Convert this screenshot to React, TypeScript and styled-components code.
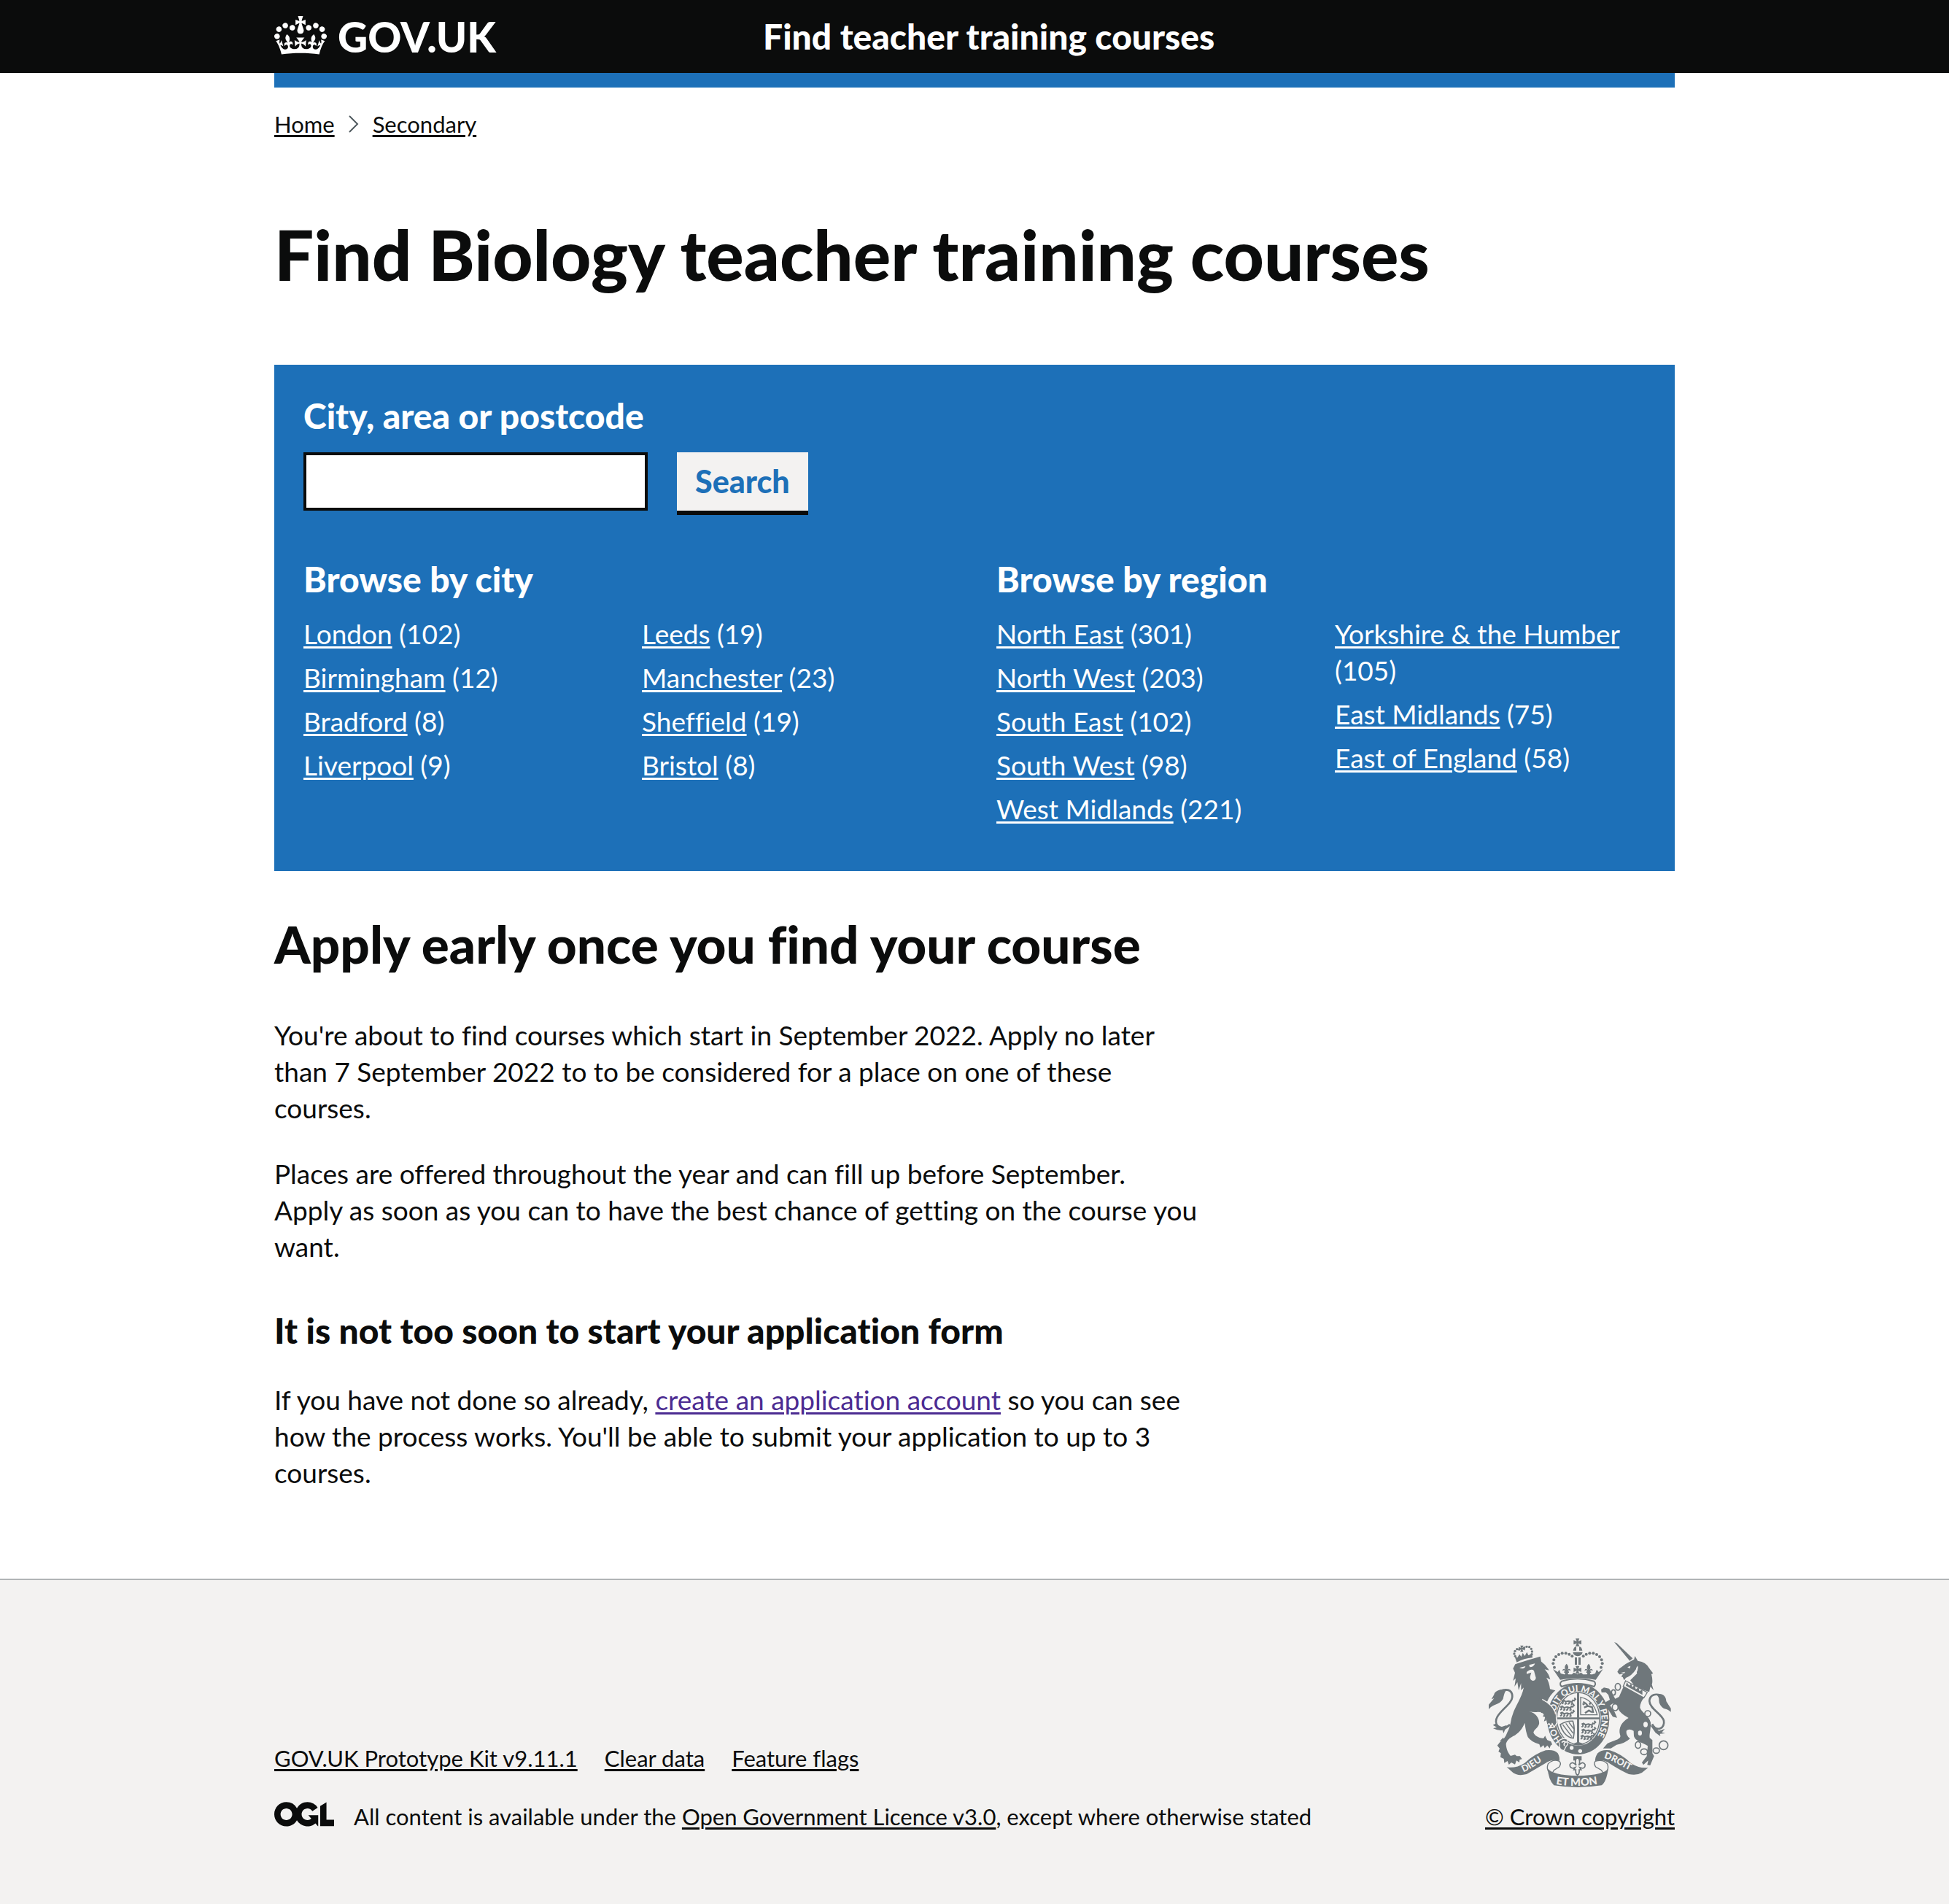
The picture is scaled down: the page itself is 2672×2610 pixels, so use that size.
import React from "react";
import styled, { createGlobalStyle } from "styled-components";

const ink = "#0b0c0c";
const blue = "#1d70b8";
const paper = "#f3f2f1";
const armsGrey = "#6f777b";
const heavy = 900;

const GlobalStyle = createGlobalStyle`
  *, *::before, *::after { box-sizing: border-box; }
  body {
    margin: 0;
    background: ${paper};
    color: ${ink};
    font-family: Lato, "Liberation Sans", Arial, sans-serif;
    font-variant-ligatures: no-common-ligatures;
  }
`;

const Page = styled.div`
  background: #fff;
`;

const Container = styled.div`
  width: calc(100% - 120px);
  max-width: 1920px;
  margin: 0 auto;
`;

const Link = styled.a<{ $tone?: "white" | "visited" }>`
  color: ${(p) => (p.$tone === "white" ? "#fff" : p.$tone === "visited" ? "#4c2c92" : ink)};
  text-decoration: underline;
  text-decoration-thickness: 3px;
  text-underline-offset: 3px;
`;

/* Header */

const HeaderBar = styled.header`
  background: ${ink};
  color: #fff;
`;

const HeaderInner = styled(Container)`
  display: flex;
  align-items: center;
  height: 100px;
`;

const LogoCell = styled.div`
  width: calc(100% / 3);
`;

const LogoLink = styled.a`
  display: inline-flex;
  align-items: center;
  gap: 15px;
  color: #fff;
  text-decoration: none;
  font-size: 57px;
  font-weight: ${heavy};
  line-height: 96px;

  svg {
    margin-bottom: 4px;
  }
`;

const ServiceName = styled.a`
  padding-left: 30px;
  color: #fff;
  text-decoration: none;
  font-size: 48px;
  font-weight: ${heavy};
  line-height: 60px;
`;

const HeaderRule = styled(Container)`
  height: 20px;
  background: ${blue};
`;

/* Breadcrumbs */

const Crumbs = styled.ol`
  display: flex;
  align-items: center;
  gap: 19px;
  margin: 0;
  padding: 30px 0 0;
  list-style: none;
  font-size: 31px;
  line-height: 40px;
`;

const Crumb = styled.li`
  display: flex;
  align-items: center;
  gap: 19px;
`;

/* Main */

const Main = styled.main`
  padding: 108px 0 120px;
`;

const PageTitle = styled.h1`
  margin: 0 0 102px;
  font-size: 96px;
  font-weight: ${heavy};
  line-height: 100px;
`;

const SearchPanel = styled.section`
  padding: 40px 40px 50px;
  background: ${blue};
  color: #fff;
`;

const SearchForm = styled.form`
  display: grid;
  grid-template-columns: 472px auto;
  justify-content: start;
  column-gap: 40px;
  row-gap: 20px;
  margin-bottom: 64px;
`;

const SearchLabel = styled.label`
  grid-column: 1 / -1;
  font-size: 48px;
  font-weight: ${heavy};
  line-height: 60px;
`;

const SearchInput = styled.input`
  width: 100%;
  height: 80px;
  padding: 10px;
  border: 4px solid ${ink};
  border-radius: 0;
  background: #fff;
  font: inherit;
  font-size: 37px;
`;

const SearchButton = styled.button`
  height: 80px;
  padding: 0 25px;
  border: 0;
  background: ${paper};
  box-shadow: 0 6px 0 ${ink};
  color: ${blue};
  font-family: inherit;
  font-size: 43px;
  font-weight: ${heavy};
  line-height: 50px;
`;

const BrowseGrid = styled.div`
  display: grid;
  grid-template-columns: 1fr 1fr;
  gap: 60px;
`;

const SubHeading = styled.h2<{ $gap?: number }>`
  margin: 0 0 ${(p) => p.$gap ?? 20}px;
  font-size: 48px;
  font-weight: ${heavy};
  line-height: 60px;
`;

const PlaceColumns = styled.div`
  display: grid;
  grid-template-columns: 1fr 1fr;
  gap: 38px;
`;

const PlaceList = styled.ul`
  margin: 0;
  padding: 0;
  list-style: none;
  font-size: 37px;
  line-height: 50px;
`;

const Place = styled.li`
  margin-bottom: 10px;
`;

const Guidance = styled.section`
  max-width: 1276px;
  margin-top: 60px;
`;

const SectionTitle = styled.h2`
  margin: 0 0 60px;
  font-size: 71px;
  font-weight: ${heavy};
  line-height: 80px;
`;

const Paragraph = styled.p`
  margin: 0 0 40px;
  font-size: 37px;
  line-height: 50px;

  &:last-child {
    margin-bottom: 0;
  }
`;

const SubSection = styled.div`
  margin-top: 60px;
`;

/* Footer */

const Footer = styled.footer`
  padding: 80px 0 100px;
  border-top: 2px solid #b1b4b6;
  background: ${paper};
  font-size: 31px;
  line-height: 40px;
`;

const FooterInner = styled(Container)`
  display: flex;
  align-items: flex-end;
  justify-content: space-between;
  gap: 60px;
`;

const FooterLinks = styled.ul`
  display: flex;
  flex-wrap: wrap;
  gap: 37px;
  margin: 0 0 40px;
  padding: 0;
  list-style: none;
`;

const Licence = styled.div`
  display: flex;
  align-items: flex-start;
  gap: 27px;
`;

const Copyright = styled.div`
  display: flex;
  flex-direction: column;
  align-items: center;
  gap: 20px;
`;

/* Drawings */

const Crown = () => (
  <svg width="72" height="53" viewBox="0 0 132 97" aria-hidden="true">
    <path
      fill="currentColor"
      fillRule="evenodd"
      d="M25 30.2c3.5 1.5 7.7-.2 9.1-3.7 1.5-3.6-.2-7.8-3.9-9.2-3.6-1.4-7.6.3-9.1 3.9-1.4 3.5.3 7.5 3.9 9zM9 39.5c3.6 1.5 7.8-.2 9.2-3.7 1.5-3.6-.2-7.8-3.9-9.1-3.6-1.5-7.6.2-9.1 3.8-1.4 3.5.3 7.5 3.8 9zM4.4 57.2c3.5 1.5 7.7-.2 9.1-3.8 1.5-3.6-.2-7.7-3.9-9.1-3.5-1.5-7.6.3-9.1 3.8-1.4 3.5.3 7.6 3.9 9.1zm38.3-21.4c3.5 1.5 7.7-.2 9.1-3.8 1.5-3.6-.2-7.7-3.9-9.1-3.6-1.5-7.6.3-9.1 3.8-1.3 3.6.4 7.7 3.9 9.1zm64.4-5.6c-3.6 1.5-7.8-.2-9.1-3.7-1.5-3.6.2-7.8 3.8-9.2 3.6-1.4 7.7.3 9.2 3.9 1.3 3.5-.4 7.5-3.9 9zm15.9 9.3c-3.6 1.5-7.7-.2-9.1-3.7-1.5-3.6.2-7.8 3.7-9.1 3.6-1.5 7.7.2 9.2 3.8 1.5 3.5-.3 7.5-3.8 9zm4.7 17.7c-3.6 1.5-7.8-.2-9.2-3.8-1.5-3.6.2-7.7 3.9-9.1 3.6-1.5 7.7.3 9.2 3.8 1.3 3.5-.4 7.6-3.9 9.1zM89.3 35.8c-3.6 1.5-7.8-.2-9.2-3.8-1.4-3.6.2-7.7 3.9-9.1 3.6-1.5 7.7.3 9.2 3.8 1.4 3.6-.3 7.7-3.9 9.1zM69.7 17.7l8.9 4.7V9.3l-8.9 2.8c-.2-.3-.5-.6-.9-.9L72.4 0H59.6l3.5 11.2c-.3.3-.6.5-.9.9l-8.8-2.8v13.1l8.8-4.7c.3.3.6.7.9.9l-5 15.4v.1c-.2.8-.4 1.6-.4 2.4 0 4.1 3.1 7.5 7 8.1h.2c.3 0 .7.1 1 .1.4 0 .7 0 1-.1h.2c4-.6 7.1-4.1 7.1-8.1 0-.8-.1-1.7-.4-2.4V34l-5.1-15.4c.4-.2.7-.6 1-.9zM66 92.8c16.9 0 32.8 1.1 47.1 3.2 4-16.9 8.9-26.7 14-33.5l-9.6-3.4c1 4.9 1.1 7.2 0 10.2-1.5-1.4-3-4.3-4.2-8.7L108.6 76c2.8-2 5-3.2 7.5-3.3-4.4 9.4-10 11.9-13.6 11.2-4.3-.8-6.3-4.6-5.6-7.9 1-4.7 5.7-5.9 8-.5 4.3-8.7-3-11.4-7.6-8.8 7.1-7.2 7.9-13.5 2.1-21.1-8 6.1-8.1 12.3-4.5 20.8-4.7-5.4-12.1-2.5-9.5 6.2 3.4-5.2 7.9-2 7.2 3.1-.6 4.3-6.4 7.8-13.5 7.2-10.3-.9-10.9-8-11.2-13.8 2.5-.5 7.1 1.8 11 7.3L80.2 60c-4.1 4.4-8 5.3-12.3 5.4 1.4-4.4 8-11.6 8-11.6H55.5s6.4 7.2 7.9 11.6c-4.2-.1-8-1-12.3-5.4l1.4 16.4c3.9-5.5 8.5-7.7 10.9-7.3-.3 5.8-.9 12.8-11.1 13.8-7.2.6-12.9-2.9-13.5-7.2-.7-5 3.8-8.3 7.1-3.1 2.7-8.7-4.6-11.6-9.4-6.2 3.7-8.5 3.6-14.7-4.6-20.8-5.8 7.6-5 13.9 2.2 21.1-4.7-2.6-11.9.1-7.7 8.8 2.3-5.5 7.1-4.2 8.1.5.7 3.3-1.3 7.1-5.7 7.9-3.5.7-9-1.8-13.5-11.2 2.5.1 4.7 1.3 7.5 3.3l-4.7-15.4c-1.2 4.4-2.7 7.2-4.3 8.7-1.1-3-.9-5.3 0-10.2l-9.5 3.4c5 6.9 9.9 16.7 14 33.5 14.8-2.1 30.8-3.2 47.7-3.2z"
    />
  </svg>
);

const Chevron = () => (
  <svg width="14" height="24" viewBox="0 0 14 24" fill="none" stroke="#505a5f" strokeWidth="2" aria-hidden="true">
    <path d="M1 1l11 11L1 23" />
  </svg>
);

const OglLogo = () => (
  <svg width="82" height="34" viewBox="0 0 483 196" role="img" aria-label="Open Government Licence">
    <path
      fill="currentColor"
      d="M421.5 142.8V.1l-50.7 32.3v161.1h112.4v-50.7zm-122.3-9.6A47.12 47.12 0 0 1 221 97.8c0-26 21.1-47.1 47.1-47.1 16.7 0 31.4 8.7 39.7 21.8l42.7-27.2A97.63 97.63 0 0 0 268.1 0c-36.5 0-68.3 20.1-85.1 49.7A98 98 0 0 0 97.8 0C43.9 0 0 43.9 0 97.8s43.9 97.8 97.8 97.8c36.5 0 68.3-20.1 85.1-49.7a97.76 97.76 0 0 0 149.6 25.4l19.4 22.2h3v-87.8h-80l24.3 27.5zM97.8 145c-26 0-47.1-21.1-47.1-47.1s21.1-47.1 47.1-47.1 47.1 21.1 47.1 47.1S123.8 145 97.8 145"
    />
  </svg>
);

const archBeads: [number, number][] = [
  [390, 197], [385, 181], [388, 166], [396, 153], [408, 144], [422, 139], [437, 139], [451, 143], [463, 151],
];

const smallBeads: [number, number][] = [
  [229, 151], [225, 141], [228, 130], [236, 122], [245, 123], [266, 116], [276, 112], [287, 113], [295, 121], [298, 132], [297, 143],
];

const Fleur = ({ x, y }: { x: number; y: number }) => (
  <path
    transform={`translate(${x} ${y})`}
    d="M0-24C-9-14-9-6-3 2-8-6-18-4-16 6-13 0-6 2-6 8H-10V13H-5L-8 22H8L5 13H10V8H6C6 2 13 0 16 6 18-4 8-6 3 2 9-6 9-14 0-24Z"
  />
);

const CrossPattee = ({ x, y, s = 1 }: { x: number; y: number; s?: number }) => (
  <path
    transform={`translate(${x} ${y}) scale(${s})`}
    d="M-8-16H8L3-4 16-9V9L3 4 8 16H-8L-3 4-16 9V-9L-3-4Z"
  />
);

const PassantLion = ({ x, y }: { x: number; y: number }) => (
  <path
    transform={`translate(${x} ${y})`}
    fill="none"
    stroke={armsGrey}
    strokeWidth="6"
    d="M0 4L8 0 16 6 28 3 42 7 46 0 54 3M6 2L5 12 0 15M16 6L18 14 12 17M32 6L30 14 24 16M42 7L44 14 38 17M50 2L57-4 52-10"
  />
);

const RoyalArms = () => (
  <svg width="250" height="204" viewBox="120 78 750 612" role="img" aria-label="Royal coat of arms" fill={armsGrey}>
    <defs>
      <path id="garter" d="M421 497A97 116 0 1 1 555 495" />
      <path id="ribbon-left" d="M262 628C295 617 322 590 362 571" />
      <path id="ribbon-mid" d="M396 677C440 687 530 687 582 674" />
      <path id="ribbon-right" d="M593 570C636 580 666 608 726 632" />
    </defs>

    {/* lion */}
    <g>
      {smallBeads.map(([x, y]) => <circle key={`${x}-${y}`} cx={x} cy={y} r="5" />)}
      <CrossPattee x={256} y={120} s={0.8} />
      <path d="M226 150L238 157 246 143 254 153 260 137 268 150 277 134 283 147 298 140 300 157Q265 160 235 176Z" />
      <path d="M220 202L229 184 240 180Q285 165 332 152L336 173Q355 186 368 209L350 205Q368 224 373 247L357 239Q369 258 372 286L394 292Q372 310 360 338L338 326Q380 355 393 390L398 424 388 439 381 425 376 437 368 425 361 432 359 413 347 419 352 401 342 398 350 388 335 383 330 374 322 380Q305 382 286 378C315 385 330 408 327 430 322 448 305 452 304 466 312 483 335 490 350 489L352 480 361 496 376 502 381 514 374 519 371 530 361 518 350 529 345 517 333 527 328 513Q296 505 281 484 272 460 268 425C258 450 246 463 228 476 205 486 194 498 191 512 192 535 202 552 210 561L228 556 235 562 248 562 257 574 247 577 246 588 234 580 228 596 213 588 203 597 197 582 184 590 182 573 168 566 170 550 160 543 165 530 155 518 167 503Q187 491 197 463C211 438 210 410 218 392 228 358 256 322 264 280L253 291 253 262 243 291 238 258 226 276 231 242 220 252 228 219Z" />
      <path d="M165 500L180 485 183 498ZM345 489L352 478 356 492ZM322 380L330 370 334 381Z" />
      <path fill="none" stroke={armsGrey} strokeWidth="8" d="M207 432C178 460 143 440 151 410 158 378 218 348 217 315 216 288 192 284 168 294" />
      <path d="M196 289C164 282 143 298 142 309L131 328 142 324 120 350 120 370C132 348 166 352 179 326 184 307 184 298 196 289ZM152 426L137 434 153 443 138 448Q160 458 177 455L181 468 187 453 207 439 190 436 165 444Z" />
      <path
        fill={paper}
        d="M246 199L271 192Q266 207 246 199ZM286 187L310 181Q306 196 289 196ZM276 216Q296 200 306 211L314 240Q312 252 301 252 287 247 291 232L295 218 276 224Z"
      />
    </g>

    {/* garter and shield */}
    <ellipse cx="488" cy="409" rx="132" ry="150" fill={paper} />
    <ellipse cx="488" cy="409" rx="128" ry="146" />
    <ellipse cx="488" cy="407" rx="93" ry="112" fill={paper} />
    <ellipse cx="488" cy="407" rx="88" ry="107" fill="none" stroke={armsGrey} strokeWidth="4" />
    <path d="M483 300H492V403H577V410H492V505L518 514 488 518 460 514 483 505V410H399V403H483Z" />
    <PassantLion x={420} y={332} />
    <PassantLion x={414} y={357} />
    <PassantLion x={414} y={382} />
    <PassantLion x={502} y={427} />
    <PassantLion x={502} y={452} />
    <PassantLion x={498} y={477} />
    <g fill="none" stroke={armsGrey}>
      <path strokeWidth="4" d="M498 320Q550 330 566 392H498Z" />
      <path strokeWidth="7" d="M508 338L520 346 528 356 545 360 550 384M512 362L528 356M516 385L532 374 545 382M506 350L514 346M534 350L540 340" />
      <path strokeWidth="5" d="M414 432Q440 416 466 418 476 450 468 488 448 488 430 466 418 450 414 432Z" />
      <path strokeWidth="4" d="M424 432L462 482M437 427L467 468M450 423L470 450" />
    </g>
    <text fill={paper} fontFamily="Lato, sans-serif" fontWeight="900" fontSize="36">
      <textPath href="#garter">HONI SOIT QUI MAL Y PENSE</textPath>
    </text>
    <g fill={paper}>
      <circle cx="461" cy="528" r="8" />
      <circle cx="496" cy="541" r="8" />
    </g>
    <path d="M330 318Q380 345 393 390L398 424 388 439 381 425 376 437 368 425 361 432 356 408 340 380 320 350Z" />
    <path fill="none" stroke={paper} strokeWidth="4" d="M340 328Q386 352 397 390L402 424 389 442 381 428 376 440 368 428 360 435" />
    <path d="M412 512Q402 500 416 494 430 484 446 494L440 504Q450 512 438 522L430 538Q408 540 412 512" stroke={paper} strokeWidth="4" />
    <path d="M420 506Q430 496 436 504 426 510 432 520" fill="none" stroke={paper} strokeWidth="5" />

    {/* crown */}
    <path fill={paper} stroke={armsGrey} strokeWidth="6" d="M420 254Q485 234 553 254 564 264 553 276 485 252 420 276 408 264 420 254Z" />
    <path d="M384 204L404 216 410 206 416 222 430 226 462 226 470 218 485 226 500 218 508 226 546 226 558 222 564 206 572 216 590 204 560 248Q486 232 414 248Z" />
    <Fleur x={440} y={206} />
    <Fleur x={531} y={206} />
    <CrossPattee x={485} y={207} />
    {archBeads.map(([x, y]) => (
      <React.Fragment key={`${x}-${y}`}>
        <circle cx={x} cy={y} r="6" />
        <circle cx={972 - x} cy={y} r="6" />
      </React.Fragment>
    ))}
    <path d="M467 128Q470 112 480 112V128ZM505 128Q502 112 492 112V128ZM466 134H506Q504 148 486 151 468 148 466 134ZM474 156H483V186H474ZM489 156H498V186H489Z" />
    <CrossPattee x={485} y={94} />

    {/* unicorn */}
    <path d="M636 93L646 97 712 160 700 170ZM705 171L718 164 721 150 733 170Q768 174 782 203L796 221 789 225Q796 252 791 268L798 291 785 276 780 298 768 294 722 276 702 250 730 222 726 204Q708 232 684 240L677 250 671 237 665 235 672 224 657 226 649 215 656 203 683 183Z" />
    <path fill={paper} d="M690 196L703 191 700 202ZM661 220L681 215 677 222ZM733 190Q738 222 704 238 729 219 726 200Z" />
    <path d="M678 268L762 318Q742 340 742 362C748 382 780 395 786 424 788 448 780 468 782 487L793 496V550L800 562 784 600 772 598 776 580 756 598 750 588 770 562 774 520C750 505 723 500 717 480L716 458Q696 446 686 458 684 476 701 490 680 510 646 515L622 530 590 530 608 510C640 495 668 492 660 474 652 446 668 420 695 405 674 392 652 380 646 352L630 346 619 353 638 381 648 404 630 400 614 374 598 358 601 340 618 330 612 310 602 300 584 300 582 288 594 280 615 284 628 304 640 326 656 318Z" />
    <path fill={paper} stroke={armsGrey} strokeWidth="4" d="M683 252L772 300 758 322 673 275Z" />
    <path d="M684 272L688 258 697 272 706 264 710 278 720 270 725 287 736 279 740 295 752 288 752 310Z" />
    <g fill="none" stroke={armsGrey} strokeWidth="5">
      <ellipse cx="651" cy="277" rx="11" ry="14" />
      <ellipse cx="633" cy="300" rx="8" ry="11" />
      <ellipse cx="640" cy="361" rx="12" ry="14" fill={paper} />
      <circle cx="774" cy="387" r="12" fill={paper} />
      <ellipse cx="734" cy="516" rx="11" ry="14" />
      <ellipse cx="759" cy="544" rx="14" ry="12" />
      <ellipse cx="809" cy="539" rx="13" ry="11" />
      <circle cx="839" cy="517" r="18" />
    </g>
    <ellipse cx="765" cy="432" rx="9" ry="11" fill={paper} />
    <ellipse cx="742" cy="467" rx="8" ry="10" fill={paper} />
    <path fill="none" stroke={armsGrey} strokeWidth="8" d="M792 430C812 466 846 446 840 416 832 388 782 368 781 336 782 308 808 304 826 312" />
    <path d="M808 308C835 300 850 316 850 336L869 366V380Q856 368 840 366 820 352 820 332 822 318 808 308ZM782 432L798 440 820 458 844 450 832 464 846 468 824 470 826 480 806 466Z" />

    {/* mottoes */}
    <path d="M194 607Q230 614 268 590 310 552 354 538 390 534 404 550 414 568 410 583 382 570 352 592 305 620 276 636 240 645 220 630Z" />
    <path d="M776 609Q740 614 704 590 664 552 618 538 584 534 568 550 556 568 558 583 590 572 620 594 664 622 696 636 730 642 750 630Z" />
    <g fill={paper} stroke={armsGrey} strokeWidth="4">
      <path d="M410 583Q384 572 364 594 356 614 368 628 382 636 388 620L410 606Q420 592 410 583Z" />
      <path d="M558 583Q592 574 608 594 616 614 602 628 590 636 584 620L560 606Q550 592 558 583Z" />
    </g>
    <path d="M362 612Q380 640 485 643 596 640 612 612 604 668 584 682 485 698 388 682 366 660 362 612Z" />
    <g fill={paper} fontFamily="Lato, sans-serif" fontWeight="900" fontSize="38">
      <text><textPath href="#ribbon-left">DIEU</textPath></text>
      <text fontSize="44"><textPath href="#ribbon-mid">ET MON</textPath></text>
      <text><textPath href="#ribbon-right">DROIT</textPath></text>
    </g>
    <path d="M468 562H502V580H468Z" />
    <path
      fill={paper}
      stroke={armsGrey}
      strokeWidth="5"
      d="M485 566Q470 582 480 600 464 580 454 596 452 610 466 612L476 608 470 618H478Q476 636 485 640 494 636 492 618H500L494 608 506 612Q518 610 516 596 506 580 490 600 500 582 485 566Z"
    />
  </svg>
);

/* Content */

type PlaceCount = [name: string, count: number];

const cities: PlaceCount[][] = [
  [["London", 102], ["Birmingham", 12], ["Bradford", 8], ["Liverpool", 9]],
  [["Leeds", 19], ["Manchester", 23], ["Sheffield", 19], ["Bristol", 8]],
];

const regions: PlaceCount[][] = [
  [["North East", 301], ["North West", 203], ["South East", 102], ["South West", 98], ["West Midlands", 221]],
  [["Yorkshire & the Humber", 105], ["East Midlands", 75], ["East of England", 58]],
];

const Browse = ({ title, columns }: { title: string; columns: PlaceCount[][] }) => (
  <div>
    <SubHeading>{title}</SubHeading>
    <PlaceColumns>
      {columns.map((places) => (
        <PlaceList key={places[0][0]}>
          {places.map(([name, count]) => (
            <Place key={name}>
              <Link href="#" $tone="white">{name}</Link> ({count})
            </Place>
          ))}
        </PlaceList>
      ))}
    </PlaceColumns>
  </div>
);

export default function App() {
  return (
    <Page>
      <GlobalStyle />
      <HeaderBar>
        <HeaderInner>
          <LogoCell>
            <LogoLink href="#">
              <Crown />
              GOV.UK
            </LogoLink>
          </LogoCell>
          <ServiceName href="#">Find teacher training courses</ServiceName>
        </HeaderInner>
      </HeaderBar>
      <HeaderRule />

      <Container>
        <nav aria-label="Breadcrumb">
          <Crumbs>
            <Crumb><Link href="#">Home</Link></Crumb>
            <Crumb><Chevron /><Link href="#">Secondary</Link></Crumb>
          </Crumbs>
        </nav>

        <Main>
          <PageTitle>Find Biology teacher training courses</PageTitle>

          <SearchPanel>
            <SearchForm onSubmit={(event) => event.preventDefault()}>
              <SearchLabel htmlFor="location">City, area or postcode</SearchLabel>
              <SearchInput id="location" name="location" type="text" />
              <SearchButton type="submit">Search</SearchButton>
            </SearchForm>
            <BrowseGrid>
              <Browse title="Browse by city" columns={cities} />
              <Browse title="Browse by region" columns={regions} />
            </BrowseGrid>
          </SearchPanel>

          <Guidance>
            <SectionTitle>Apply early once you find your course</SectionTitle>
            <Paragraph>
              You're about to find courses which start in September 2022. Apply no later than 7 September 2022 to to be
              considered for a place on one of these courses.
            </Paragraph>
            <Paragraph>
              Places are offered throughout the year and can fill up before September.
              <br />
              Apply as soon as you can to have the best chance of getting on the course you want.
            </Paragraph>
            <SubSection>
              <SubHeading as="h3" $gap={40}>It is not too soon to start your application form</SubHeading>
              <Paragraph>
                If you have not done so already, <Link href="#" $tone="visited">create an application account</Link> so
                you can see how the process works. You'll be able to submit your application to up to 3 courses.
              </Paragraph>
            </SubSection>
          </Guidance>
        </Main>
      </Container>

      <Footer>
        <FooterInner>
          <div>
            <FooterLinks>
              <li><Link href="#">GOV.UK Prototype Kit v9.11.1</Link></li>
              <li><Link href="#">Clear data</Link></li>
              <li><Link href="#">Feature flags</Link></li>
            </FooterLinks>
            <Licence>
              <OglLogo />
              <span>
                All content is available under the <Link href="#">Open Government Licence v3.0</Link>, except where
                otherwise stated
              </span>
            </Licence>
          </div>
          <Copyright>
            <RoyalArms />
            <Link href="#">© Crown copyright</Link>
          </Copyright>
        </FooterInner>
      </Footer>
    </Page>
  );
}
